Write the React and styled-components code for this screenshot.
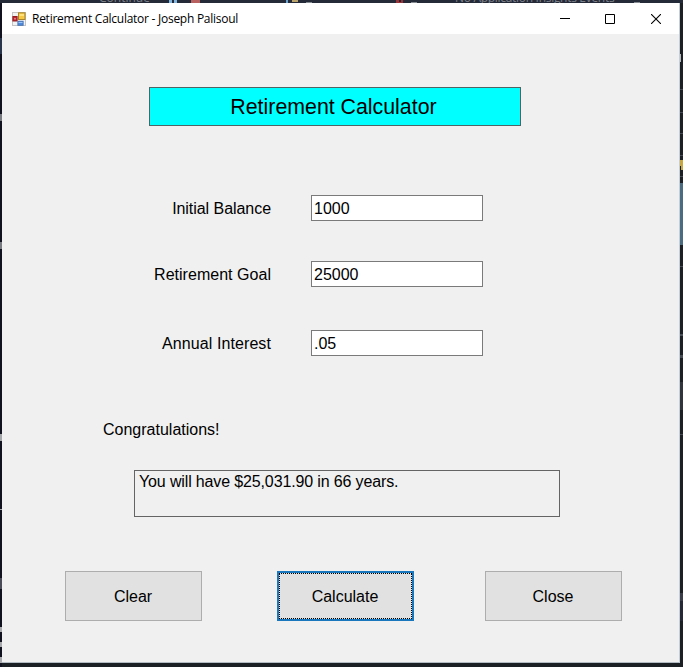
import React from 'react';
import styled, { createGlobalStyle } from 'styled-components';

const GlobalStyle = createGlobalStyle`
  * { box-sizing: border-box; }
  html, body { margin: 0; padding: 0; overflow: hidden; }
`;

const Desktop = styled.div`
  position: relative;
  width: 683px;
  height: 667px;
  padding: 3px 3px 4px 2px;
  overflow: hidden;
  background: linear-gradient(to right, #10131f 0 2px, #1a2024 2px);
  font-family: 'Liberation Sans', Arial, sans-serif;
`;

const TopStrip = styled.div`
  position: absolute;
  top: 0;
  left: 0;
  width: 100%;
  height: 3px;
  overflow: hidden;
  background: #252a38;
`;

const StripText = styled.span`
  position: absolute;
  left: ${(p) => p.$x}px;
  bottom: -3px;
  font: 12px/16px 'Open Sans', sans-serif;
  letter-spacing: ${(p) => p.$spacing || 0}px;
  white-space: nowrap;
  color: #7d818a;
`;

const Fleck = styled.i`
  position: absolute;
  left: ${(p) => p.$x}px;
  top: ${(p) => p.$y}px;
  width: ${(p) => p.$w}px;
  height: ${(p) => p.$h}px;
  background: ${(p) => p.$color};
`;

const Window = styled.main`
  position: relative;
  display: flex;
  flex-direction: column;
  width: 678px;
  height: 660px;
  background: #f0f0f0;
  border-right: 1px solid #c3ced8;
  border-bottom: 1px solid #b4bcc3;
`;

const TitleBar = styled.header`
  display: flex;
  align-items: center;
  flex: none;
  height: 31px;
  padding-left: 10px;
  background: #fff;
`;

const WindowTitle = styled.span`
  flex: 1;
  margin-left: 6px;
  font: 12px/16px 'Open Sans', 'Noto Sans', sans-serif;
  letter-spacing: -0.26px;
  color: #000;
`;

const Controls = styled.div`
  display: flex;
  height: 31px;
`;

const ControlButton = styled.button`
  display: flex;
  align-items: center;
  justify-content: center;
  width: 46px;
  padding: 0;
  border: 0;
  background: transparent;
`;

const Form = styled.div`
  display: flex;
  flex-direction: column;
  padding-top: 53px;
  font-size: 16px;
  line-height: 18px;
  color: #000;
`;

const Heading = styled.h1`
  width: 372px;
  height: 39px;
  margin: 0 0 69px 147px;
  padding-right: 3px;
  border: 1px solid #4f6464;
  background: #00ffff;
  font-size: 21.33px;
  font-weight: 400;
  line-height: 38px;
  text-align: center;
`;

const Fields = styled.div`
  display: grid;
  grid-template-columns: 269px 172px;
  grid-template-rows: 26px 26px 26px;
  row-gap: 40px;
  column-gap: 40px;
`;

const Field = styled.label`
  display: grid;
  grid-column: 1 / -1;
  grid-template-columns: subgrid;
  align-items: center;
  height: 26px;
  margin-top: ${(p) => p.$drop || 0}px;
  text-align: right;
`;

const FieldName = styled.span`
  padding-top: 2px;
  letter-spacing: ${(p) => p.$spacing || 0}px;
`;

const TextBox = styled.input`
  width: 172px;
  height: 26px;
  padding: 2px 2px 0;
  border: 1px solid #7a7a7a;
  border-radius: 0;
  outline: 0;
  background: #fff;
  font: 16px 'Liberation Sans', Arial, sans-serif;
  color: #000;
`;

const Message = styled.p`
  margin: 68px 0 0 101px;
  line-height: 18px;
`;

const Result = styled.output`
  display: block;
  width: 426px;
  height: 47px;
  margin: 31px 0 0 132px;
  padding: 2px 4px;
  border: 1px solid #646464;
  letter-spacing: -0.14px;
`;

const Actions = styled.div`
  display: grid;
  grid-template-columns: 212px 208px 137px;
  margin: 54px 0 0 63px;
`;

const ActionButton = styled.button`
  width: 137px;
  height: 50px;
  padding: 2px 1px 0 0;
  border: ${(p) => (p.$focused ? '2px solid #1b77bd' : '1px solid #adadad')};
  border-radius: 0;
  outline: ${(p) => (p.$focused ? '1px dotted #000' : '0')};
  outline-offset: -3px;
  background: #e1e1e1;
  font: 16px 'Liberation Sans', Arial, sans-serif;
  color: #000;
`;

function FormIcon() {
  return (
    <svg width="14" height="14" viewBox="0 0 14 14" aria-hidden="true">
      <rect x=".5" y=".5" width="13" height="13" fill="#f2f2f2" stroke="#c4c4c4" />
      <rect x="6.5" y=".8" width="6.5" height="6.7" fill="#f6c843" stroke="#a8842a" />
      <path d="M7.5 2h4.5v2h-4.5z" fill="#ffe27b" />
      <rect x=".9" y="4.5" width="4.2" height="4.5" fill="#c8252d" stroke="#8f1f25" />
      <path d="M2.3 6h1.4v1.4H2.3z" fill="#f3a0a0" />
      <rect x="5.9" y="9.3" width="5.2" height="4" fill="#4b8be0" stroke="#4a75b5" />
      <path d="M6.5 10h4v1h-4z" fill="#9cc5f5" />
    </svg>
  );
}

const fields = [
  { label: 'Initial Balance', value: '1000', spacing: -0.05 },
  { label: 'Retirement Goal', value: '25000', spacing: 0.03 },
  { label: 'Annual Interest', value: '.05', drop: 3, spacing: 0.09 },
];

const topFlecks = [
  [169, 0, 3, 3, '#80b5e0'], [174, 0, 3, 3, '#80b5e0'], [191, 0, 9, 3, '#b7605f'],
  [286, 0, 2, 3, '#6aa4cf'], [292, 0, 6, 2, '#b9a36b'], [306, 2, 6, 1, '#858990'],
  [396, 0, 7, 3, '#96343a'], [399, 0, 2, 2, '#301f29'], [411, 2, 6, 1, '#858990'],
  [634, 2, 6, 1, '#858990'],
];

const sideFlecks = [
  [0, 38, 2, 16, '#28354b'], [0, 114, 2, 7, '#777a80'], [0, 242, 2, 7, '#777a80'], [0, 434, 2, 7, '#a4a7aa'],
  [0, 509, 2, 1, '#a9abb0'], [0, 578, 2, 11, '#4a4d58'], [0, 627, 2, 5, '#a7a9ac'],
  [0, 642, 2, 5, '#a7a9ac'], [0, 657, 2, 6, '#a7a9ac'],
  [680, 54, 1, 8, '#b5b9be'], [680, 89, 3, 1, '#454b53'], [680, 112, 3, 1, '#454b53'],
  [680, 133, 3, 1, '#454b53'], [680, 155, 3, 1, '#454b53'], [680, 160, 3, 6, '#c9a740'], [681, 166, 2, 4, '#c9a740'],
  [680, 176, 3, 1, '#454b53'], [680, 183, 3, 62, '#4b6c80'], [680, 266, 3, 1, '#454b53'],
  [680, 334, 3, 2, '#4a5057'], [680, 355, 3, 3, '#454b53'], [680, 382, 3, 28, '#30353b'],
  [680, 434, 3, 1, '#454b53'], [680, 593, 3, 8, '#383d47'], [680, 601, 3, 20, '#252936'],
];

export default function App() {
  return (
    <>
      <GlobalStyle />
      <Desktop>
        <TopStrip>
          <StripText $x={99}>Continue</StripText>
          <StripText $x={455} $spacing={-0.3}>No Application Insights Events</StripText>
          {topFlecks.map(([x, y, w, h, color]) => (
            <Fleck key={x} $x={x} $y={y} $w={w} $h={h} $color={color} />
          ))}
        </TopStrip>
        {sideFlecks.map(([x, y, w, h, color]) => (
          <Fleck key={`${x}-${y}`} $x={x} $y={y} $w={w} $h={h} $color={color} />
        ))}
        <Window>
          <TitleBar>
            <FormIcon />
            <WindowTitle>Retirement Calculator - Joseph Palisoul</WindowTitle>
            <Controls>
              <ControlButton aria-label="Minimize">
                <svg width="12" height="10" viewBox="0 0 12 10"><path d="M2 4.5h10" stroke="#000" /></svg>
              </ControlButton>
              <ControlButton aria-label="Maximize">
                <svg width="10" height="10" viewBox="0 0 10 10"><path d="M.5.5h9v9h-9z" fill="none" stroke="#000" /></svg>
              </ControlButton>
              <ControlButton aria-label="Close window">
                <svg width="10" height="10" viewBox="0 0 10 10"><path d="m0 0 10 10M10 0 0 10" stroke="#000" strokeWidth="1.1" /></svg>
              </ControlButton>
            </Controls>
          </TitleBar>
          <Form>
            <Heading>Retirement Calculator</Heading>
            <Fields>
              {fields.map((f) => (
                <Field key={f.label} $drop={f.drop}>
                  <FieldName $spacing={f.spacing}>{f.label}</FieldName>
                  <TextBox defaultValue={f.value} />
                </Field>
              ))}
            </Fields>
            <Message>Congratulations!</Message>
            <Result>You will have $25,031.90 in 66 years.</Result>
            <Actions>
              <ActionButton>Clear</ActionButton>
              <ActionButton $focused>Calculate</ActionButton>
              <ActionButton>Close</ActionButton>
            </Actions>
          </Form>
        </Window>
      </Desktop>
    </>
  );
}
